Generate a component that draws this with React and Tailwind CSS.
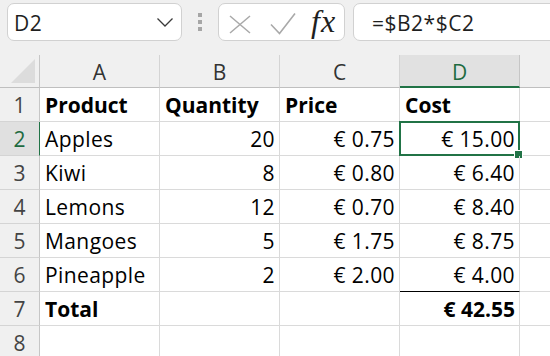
import React from 'react';

const rows = [
  { n: 1, cells: [['Product', 'l', true], ['Quantity', 'l', true], ['Price', 'l', true], ['Cost', 'l', true]] },
  { n: 2, cells: [['Apples', 'l'], ['20', 'r'], ['€ 0.75', 'r'], ['€ 15.00', 'r']] },
  { n: 3, cells: [['Kiwi', 'l'], ['8', 'r'], ['€ 0.80', 'r'], ['€ 6.40', 'r']] },
  { n: 4, cells: [['Lemons', 'l'], ['12', 'r'], ['€ 0.70', 'r'], ['€ 8.40', 'r']] },
  { n: 5, cells: [['Mangoes', 'l'], ['5', 'r'], ['€ 1.75', 'r'], ['€ 8.75', 'r']] },
  { n: 6, cells: [['Pineapple', 'l'], ['2', 'r'], ['€ 2.00', 'r'], ['€ 4.00', 'r']] },
  { n: 7, cells: [['Total', 'l', true], ['', 'l'], ['', 'l'], ['€ 42.55', 'r', true]] },
  { n: 8, cells: [['', 'l'], ['', 'l'], ['', 'l'], ['', 'l']] },
];

function FormulaBar() {
  return (
    <div className="flex h-[55px] items-start pt-[3px]">
      {/* Name box */}
      <div className="ml-[7px] flex h-[38px] w-[175px] shrink-0 items-center justify-between rounded-[7px] border border-[#d1d1d1] bg-white pl-[6px] pr-[8px]">
        <span className="pt-[1px] leading-[28px] tracking-[0.4px] text-[#1f1f1f]">D2</span>
        <svg width="16" height="9" viewBox="0 0 16 9">
          <path d="M0.5 0.5L8 8L15.5 0.5" stroke="#3a3a3a" strokeWidth="1.3" fill="none" />
        </svg>
      </div>

      <div className="flex w-[36px] shrink-0 flex-col items-center gap-[3px] pt-[10px]">
        <div className="h-[4px] w-[4px] bg-[#a6a6a6]" />
        <div className="h-[4px] w-[4px] bg-[#a6a6a6]" />
        <div className="h-[4px] w-[4px] bg-[#a6a6a6]" />
      </div>

      {/* Cancel / enter / function */}
      <div className="flex h-[38px] w-[127px] shrink-0 items-start rounded-[7px] border border-[#d1d1d1] bg-white">
        <svg className="ml-[10px] mt-[11px]" width="22" height="19" viewBox="0 0 22 19">
          <path d="M1 1L21 18M21 1L1 18" stroke="#a9a9a9" strokeWidth="1.5" fill="none" />
        </svg>
        <svg className="ml-[19px] mt-[8px]" width="26" height="23" viewBox="0 0 26 23">
          <path d="M1 12.5L9.5 21.5L25 1.5" stroke="#a9a9a9" strokeWidth="1.6" fill="none" />
        </svg>
        <span className="ml-[15px] mt-[-2px] font-['Liberation_Serif',serif] text-[32px] font-medium italic leading-[38px] tracking-[1px] text-[#1f1f1f]">fx</span>
      </div>

      {/* Formula input */}
      <div className="ml-[8px] flex h-[38px] w-[220px] shrink-0 items-center rounded-l-[7px] border border-[#d1d1d1] bg-white pl-[18px]">
        <span className="pt-[1px] leading-[28px] tracking-[0.5px] text-[#1f1f1f]">=$B2*$C2</span>
      </div>
    </div>
  );
}

function Sheet() {
  return (
    <div className="grid grid-cols-[40px_120px_120px_120px_120px_1fr] bg-white">
      {/* Column headers */}
      <div className="flex h-[33px] items-end justify-end border-b border-r border-b-[#bfbfbf] border-r-[#c6c6c6] bg-[#f0f0f0] pb-[4px] pr-[4px]">
        <svg width="24" height="24" viewBox="0 0 24 24">
          <path d="M24 0L24 24L0 24Z" fill="#dcdcdc" />
        </svg>
      </div>
      <div className="h-[33px] border-b border-r border-b-[#bfbfbf] border-r-[#d4d4d4] bg-[#f0f0f0] text-center leading-[34px] text-[#333]">A</div>
      <div className="h-[33px] border-b border-r border-b-[#bfbfbf] border-r-[#d4d4d4] bg-[#f0f0f0] text-center leading-[34px] text-[#333]">B</div>
      <div className="h-[33px] border-b border-r border-b-[#bfbfbf] border-r-[#d4d4d4] bg-[#f0f0f0] text-center leading-[34px] text-[#333]">C</div>
      <div className="h-[33px] border-b-2 border-r border-b-[#217346] border-r-[#c6c6c6] bg-[#e1e1e1] text-center leading-[34px] text-[#1e6b40]">D</div>
      <div className="h-[33px] border-b border-b-[#bfbfbf] bg-[#f0f0f0]" />

      {rows.map(row => (
        <React.Fragment key={row.n}>
          <div
            className={`h-[34px] border-b border-r border-b-[#d4d4d4] text-center leading-[34px] ${
              row.n === 2 ? 'border-r-[#217346] bg-[#e0e0e0] text-[#1e6b40]' : 'border-r-[#c6c6c6] bg-[#f0f0f0] text-[#444]'
            }`}
          >
            {row.n}
          </div>
          {row.cells.map(([text, align, bold], i) => {
            const isD = i === 3;
            const underline = isD && row.n === 6;
            const selected = isD && row.n === 2;
            return (
              <div
                key={i}
                className={`relative h-[34px] whitespace-nowrap border-b border-r border-r-[#dadada] pl-[5px] pr-[4px] leading-[34px] text-black ${
                  underline ? 'border-b-black' : 'border-b-[#dadada]'
                } ${align === 'r' ? 'text-right' : 'text-left'} ${bold ? 'font-bold' : 'tracking-[0.4px]'}`}
              >
                {text}
                {selected && (
                  <div className="absolute -inset-px border-2 border-[#217346]">
                    <div className="absolute -bottom-[5px] -right-[5px] h-[9px] w-[9px] border border-white bg-[#217346]" />
                  </div>
                )}
              </div>
            );
          })}
          <div className="h-[34px] border-b border-b-[#dadada]" />
        </React.Fragment>
      ))}
    </div>
  );
}

export default function App() {
  return (
    <div className="h-[356px] w-[550px] overflow-hidden bg-[#f0f0f0] font-['Open_Sans',sans-serif] text-[21px]">
      <FormulaBar />
      <Sheet />
    </div>
  );
}
